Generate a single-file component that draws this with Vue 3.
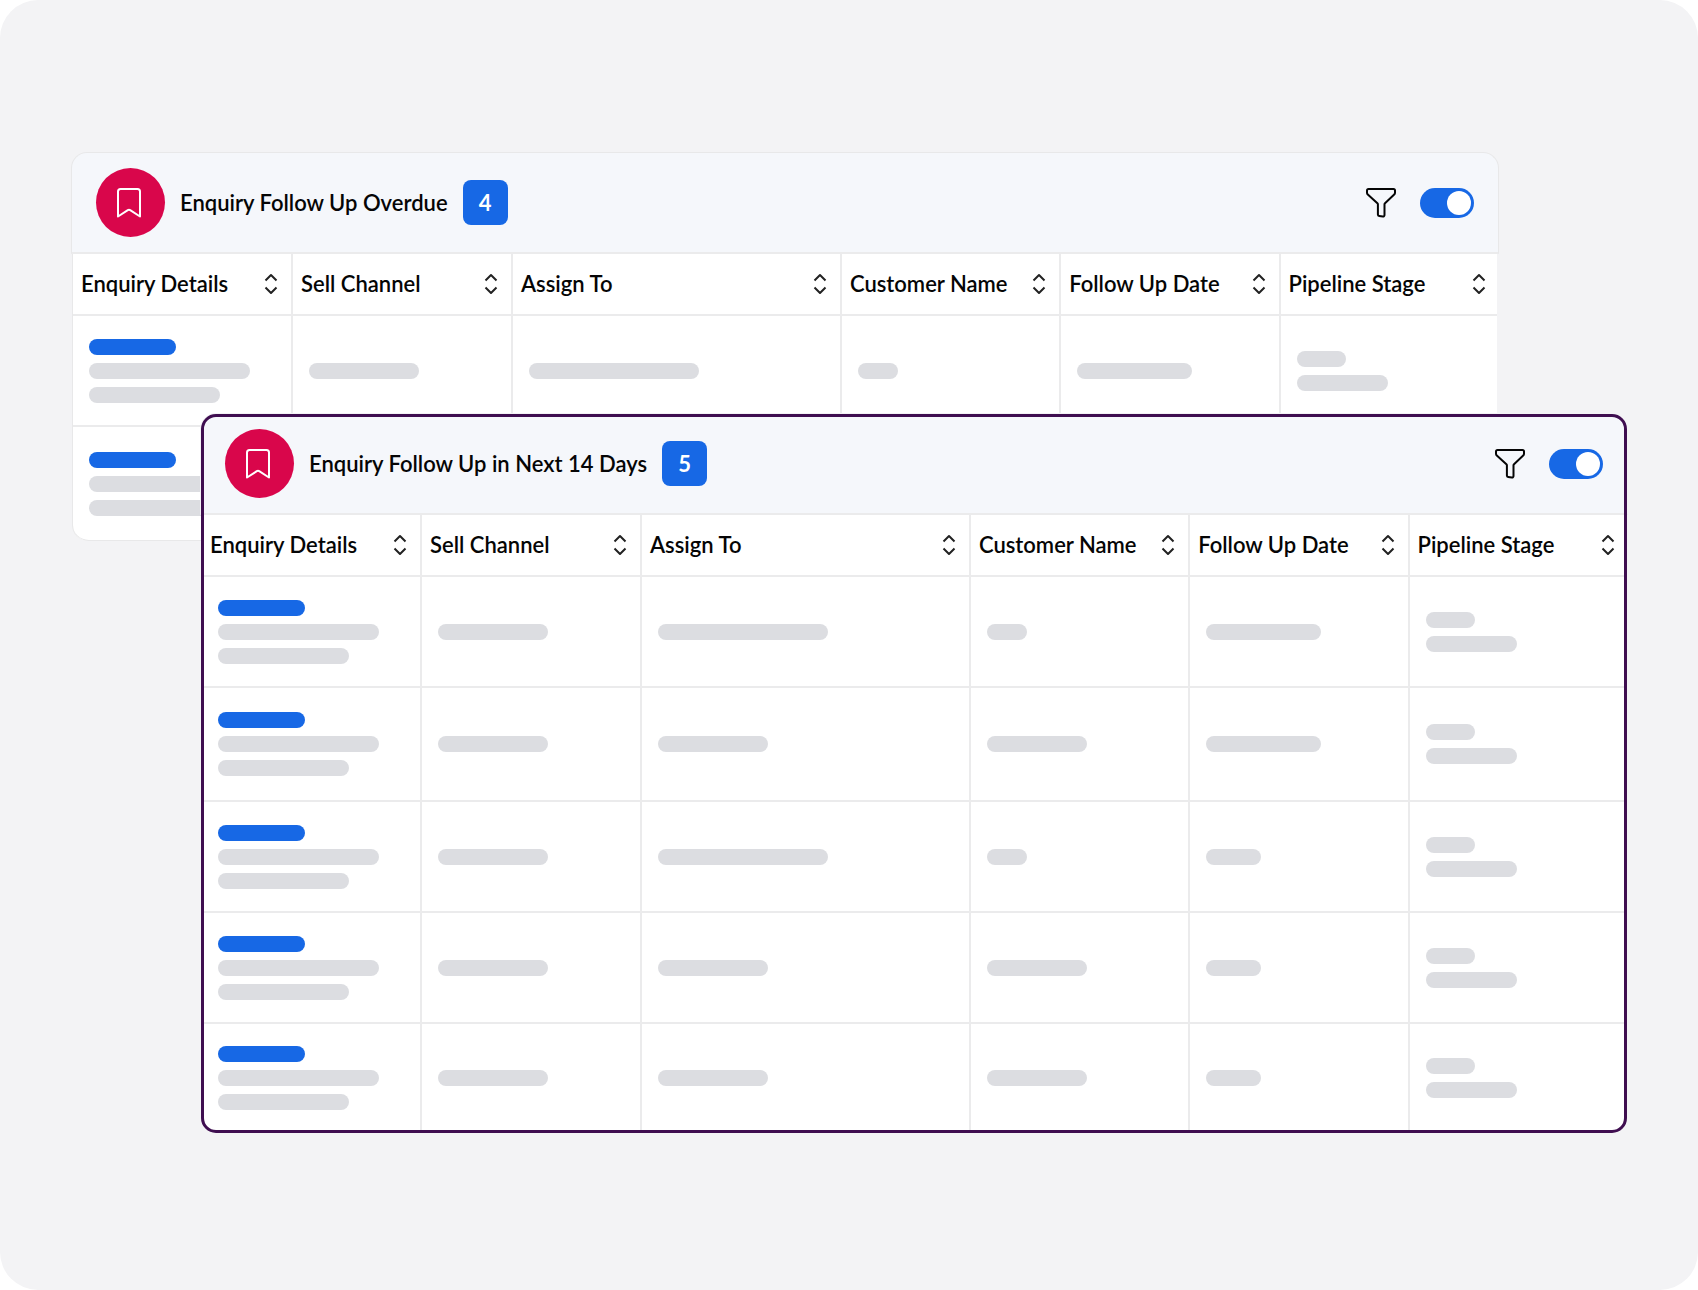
<script setup>
import { reactive } from 'vue'

const columns = [
  { key: 'details', label: 'Enquiry Details' },
  { key: 'channel', label: 'Sell Channel' },
  { key: 'assign', label: 'Assign To' },
  { key: 'customer', label: 'Customer Name' },
  { key: 'date', label: 'Follow Up Date' },
  { key: 'stage', label: 'Pipeline Stage' },
]

// Every cell is a list of placeholder bar widths.
const row = (assign, customer, date) => [[87, 161, 131], [110], [assign], [customer], [date], [49, 91]]

const panels = reactive([
  {
    id: 'overdue',
    title: 'Enquiry Follow Up Overdue',
    count: 4,
    enabled: true,
    rows: [row(170, 40, 115), row(110, 100, 115)],
  },
  {
    id: 'upcoming',
    title: 'Enquiry Follow Up in Next 14 Days',
    count: 5,
    enabled: true,
    rows: [
      row(170, 40, 115),
      row(110, 100, 115),
      row(170, 40, 55),
      row(110, 100, 55),
      row(110, 100, 55),
    ],
  },
])
</script>

<template>
  <main class="stage">
    <section
      v-for="panel in panels"
      :key="panel.id"
      class="panel"
      :class="`panel-${panel.id}`"
      :aria-labelledby="`${panel.id}-title`"
    >
      <header class="panel-header">
        <span class="panel-icon">
          <svg width="26" height="32" viewBox="0 0 26 32" aria-hidden="true">
            <path d="M2 29.500V4.500a2.500 2.500 0 0 1 2.500-2.500h17a2.500 2.500 0 0 1 2.500 2.500v25l-9.800-6.300a2.200 2.200 0 0 0-2.400 0z" />
          </svg>
        </span>
        <h2 :id="`${panel.id}-title`">{{ panel.title }}</h2>
        <span class="count">{{ panel.count }}</span>
        <div class="actions">
          <button type="button" class="filter" aria-label="Filter">
            <svg width="32" height="32" viewBox="0 0 32 32" aria-hidden="true">
              <path d="M3.500 2h25a1.500 1.500 0 0 1 1.500 1.500v2.300a2.500 2.500 0 0 1-.8 1.800L20 16.200a1.500 1.500 0 0 0-.5 1.100V28a1.500 1.500 0 0 1-1.700 1.500l-3.600-.6a1.500 1.500 0 0 1-1.300-1.500V17.300a1.500 1.500 0 0 0-.5-1.100L2.800 7.600A2.500 2.500 0 0 1 2 5.800V3.500A1.500 1.500 0 0 1 3.500 2z" />
            </svg>
          </button>
          <input v-model="panel.enabled" type="checkbox" role="switch" class="switch" :aria-label="panel.title" />
        </div>
      </header>

      <table>
        <colgroup>
          <col v-for="c in columns" :key="c.key" :class="`col-${c.key}`" />
        </colgroup>
        <thead>
          <tr>
            <th v-for="c in columns" :key="c.key" scope="col">
              <div class="heading">
                {{ c.label }}
                <button type="button" class="sort" :aria-label="`Sort by ${c.label}`">
                  <svg width="14" height="22" viewBox="0 0 14 22" aria-hidden="true">
                    <path d="M1.500 7.500L7 2l5.500 5.500M1.500 14.500L7 20l5.500-5.500" />
                  </svg>
                </button>
              </div>
            </th>
          </tr>
        </thead>
        <tbody>
          <tr v-for="(cells, r) in panel.rows" :key="r">
            <td v-for="(bars, c) in cells" :key="c">
              <div class="bars">
                <span
                  v-for="(width, b) in bars"
                  :key="b"
                  class="bar"
                  :class="{ link: c === 0 && b === 0 }"
                  :style="{ width: `${width}px` }"
                ></span>
              </div>
            </td>
          </tr>
        </tbody>
      </table>
    </section>
  </main>
</template>

<style>
body {
  margin: 0;
  background: #fff;
}
</style>

<style scoped>
.stage {
  box-sizing: border-box;
  display: flex;
  flex-direction: column;
  min-height: 100vh;
  padding: 152px 70px 152px 71px;
  border-radius: 38px;
  background: #f3f3f5;
  color: #050505;
  font-family: Lato, "Liberation Sans", sans-serif;
  font-size: 22px;
  font-weight: 600;
  line-height: 28px;
}

.panel {
  position: relative;
  width: calc(100% - 129px);
}

.panel-upcoming {
  align-self: flex-end;
  margin-top: -128px;
}

/* Frame drawn above the table edges */
.panel-upcoming::after {
  content: "";
  position: absolute;
  inset: 1px 1px 0;
  border: 3px solid #3f0e50;
  border-radius: 15px;
  pointer-events: none;
}

.panel-header {
  box-sizing: border-box;
  display: flex;
  align-items: center;
  height: 102px;
  padding: 0 24px;
  border: 1px solid #e8e8e9;
  border-bottom: 2px solid #ebebec;
  border-radius: 16px 16px 0 0;
  background: #f5f7fb;
}

.panel-upcoming .panel-header {
  border-color: #f3f3f5 #f3f3f5 #ebebec;
}

.panel-icon {
  box-sizing: border-box;
  display: flex;
  align-items: center;
  justify-content: center;
  width: 69px;
  height: 69px;
  margin-right: 15px;
  padding-right: 3px;
  border-radius: 50%;
  background: #d9064b;
}

svg {
  display: block;
  fill: none;
  stroke: currentColor;
  stroke-width: 2;
  stroke-linejoin: round;
}

.panel-icon svg {
  color: #fff;
}

h2 {
  margin: 0;
  font-size: inherit;
  font-weight: inherit;
}

.count {
  width: 45px;
  margin-left: 15px;
  border-radius: 8px;
  background: #1768e5;
  color: #fff;
  font-weight: 700;
  line-height: 45px;
  text-align: center;
}

.actions {
  display: flex;
  align-items: center;
  gap: 23px;
  margin-left: auto;
}

button {
  padding: 0;
  border: 0;
  background: none;
  color: inherit;
  cursor: pointer;
}

.switch {
  appearance: none;
  display: flex;
  align-items: center;
  box-sizing: border-box;
  width: 54px;
  height: 30px;
  margin: 0;
  padding: 3px;
  border-radius: 15px;
  background: #b9bcc4;
  cursor: pointer;
}

.switch::before {
  content: "";
  width: 24px;
  height: 24px;
  border-radius: 50%;
  background: #fff;
}

.switch:checked {
  justify-content: flex-end;
  background: #1768e5;
}

table {
  box-sizing: border-box;
  width: calc(100% - 3px);
  margin-left: 1px;
  table-layout: fixed;
  border-collapse: separate;
  border-spacing: 0;
  border-left: 1px solid #e8e8e9;
  border-radius: 0 0 16px 16px;
  background: #fff;
}

.panel-upcoming table {
  overflow: hidden;
}

.col-details,
.col-channel {
  width: 15.45%;
}

.col-customer,
.col-date {
  width: 15.4%;
}

.col-assign {
  width: 23.1%;
}

th,
td {
  box-sizing: border-box;
  border-right: 2px solid #ebebec;
  border-bottom: 2px solid #ebebec;
  text-align: left;
}

th:last-child,
td:last-child {
  border-right: 0;
}

th {
  height: 62px;
  padding: 0 13px 0 8px;
  font-weight: inherit;
}

th:last-child {
  padding-right: 11px;
}

.heading {
  display: flex;
  align-items: center;
  justify-content: space-between;
  white-space: nowrap;
}

.sort {
  color: #222;
}

td {
  height: 111px;
  padding: 0 16px;
}

tr:nth-child(2) td {
  height: 114px;
}

.panel-upcoming tbody tr:last-child td {
  height: 109px;
}

.panel-overdue tbody tr:last-child td {
  border-bottom: 1px solid #e8e8e9;
}

.panel-overdue tbody tr:last-child td:first-child {
  border-bottom-left-radius: 16px;
}

.bars {
  display: flex;
  flex-direction: column;
  gap: 8px;
}

.bar {
  height: 16px;
  border-radius: 8px;
  background: #dcdde1;
}

.bar.link {
  background: #1768e5;
}
</style>
